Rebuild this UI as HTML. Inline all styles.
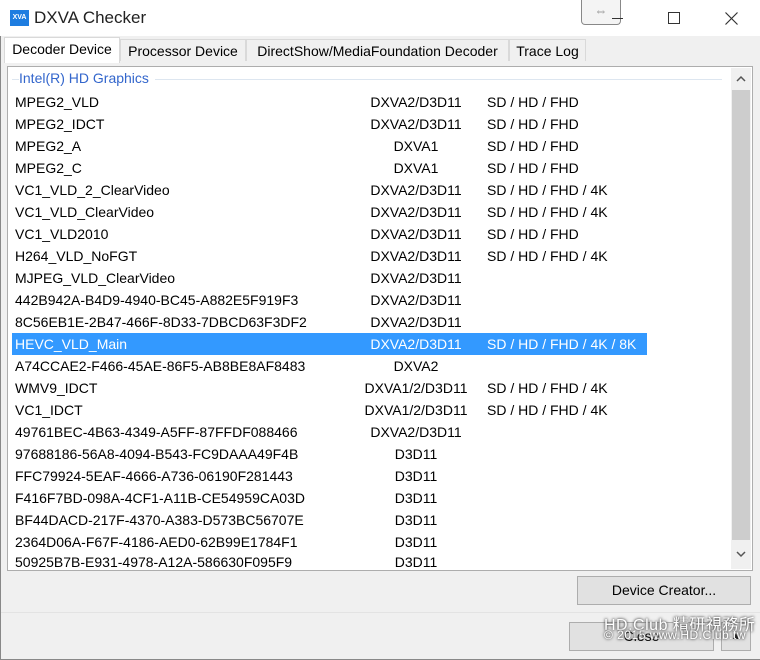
<!DOCTYPE html>
<html><head><meta charset="utf-8"><style>
*{margin:0;padding:0;box-sizing:border-box}
body{width:760px;height:660px;overflow:hidden;background:#f0f0f0;font-family:"Liberation Sans",sans-serif;font-size:14px;color:#000;position:relative}
.win{position:absolute;left:0;top:0;width:760px;height:660px;border-left:1px solid #888;border-bottom:1px solid #888}
.title{position:absolute;left:0;top:0;width:760px;height:36px;background:#fff}
.logo{position:absolute;left:10px;top:10px;width:19px;height:16px;background:#1e7de0;color:#fff;font-size:7px;font-weight:bold;line-height:16px;text-align:center}
.ttext{position:absolute;left:34px;top:8px;font-size:17px;color:#222}
.tab{position:absolute;top:39px;height:22px;border:1px solid #d9d9d9;border-bottom:none;background:#f0f0f0;padding:3px 0 0;font-size:14px;text-align:center}
.panel{position:absolute;left:7px;top:66px;width:746px;height:505px;background:#fff;border:1px solid #adadad}
.grp{position:absolute;left:19px;top:70px;color:#3366cc;font-size:14px;background:#fff;padding-right:6px}
.gline{position:absolute;left:12px;top:79px;width:710px;height:1px;background:#dde6f0}
.row{position:absolute;left:12px;width:635px;height:22px;line-height:22px}
.row span{position:absolute}
.a{left:3px}.b{left:330px;width:148px;text-align:center}.c{left:475px}
.sel{background:#3399ff;color:#fff}
.sb{position:absolute;left:731px;top:68px;width:20px;height:501px;background:#f0f0f0}
.thumb{position:absolute;left:732px;top:90px;width:18px;height:450px;background:#cdcdcd}
.btn{position:absolute;background:#e1e1e1;border:1px solid #adadad;text-align:center}
.wm{position:absolute;color:#fff;text-shadow:0 0 3px #555,0 0 2px #555}
</style></head><body>
<div class="win"></div>
<div class="title"><div class="logo">XVA</div><div class="ttext">DXVA Checker</div>
<div style="position:absolute;left:581px;top:0;width:40px;height:25px;border:1px solid #888;border-top:none;border-radius:0 0 4px 4px;background:#f4f4f4;color:#888;font-size:13px;text-align:center;line-height:22px">⇔</div>
<div style="position:absolute;left:612px;top:18px;width:11px;height:1px;background:#333"></div>
<div style="position:absolute;left:668px;top:12px;width:12px;height:12px;border:1px solid #333"></div>
<svg style="position:absolute;left:725px;top:12px" width="13" height="13"><path d="M0.5 0.5L12.5 12.5M12.5 0.5L0.5 12.5" stroke="#333" stroke-width="1.2"/></svg>
</div>
<div class="tab" style="left:4px;top:37px;width:116px;height:26px;background:#fff;z-index:2">Decoder Device</div>
<div class="tab" style="left:120px;width:126px">Processor Device</div>
<div class="tab" style="left:246px;width:263px">DirectShow/MediaFoundation Decoder</div>
<div class="tab" style="left:509px;width:77px">Trace Log</div>
<div class="panel"></div>
<div class="gline"></div>
<div class="grp">Intel(R) HD Graphics</div>
<div class="sb"></div><div class="thumb"></div>
<svg style="position:absolute;left:736px;top:75px" width="10" height="7"><path d="M1 6L5 2L9 6" stroke="#555" stroke-width="1.5" fill="none"/></svg>
<svg style="position:absolute;left:736px;top:551px" width="10" height="7"><path d="M1 1L5 5L9 1" stroke="#555" stroke-width="1.5" fill="none"/></svg>
<div class="row" style="top:91px"><span class="a">MPEG2_VLD</span><span class="b">DXVA2/D3D11</span><span class="c">SD / HD / FHD</span></div>
<div class="row" style="top:113px"><span class="a">MPEG2_IDCT</span><span class="b">DXVA2/D3D11</span><span class="c">SD / HD / FHD</span></div>
<div class="row" style="top:135px"><span class="a">MPEG2_A</span><span class="b">DXVA1</span><span class="c">SD / HD / FHD</span></div>
<div class="row" style="top:157px"><span class="a">MPEG2_C</span><span class="b">DXVA1</span><span class="c">SD / HD / FHD</span></div>
<div class="row" style="top:179px"><span class="a">VC1_VLD_2_ClearVideo</span><span class="b">DXVA2/D3D11</span><span class="c">SD / HD / FHD / 4K</span></div>
<div class="row" style="top:201px"><span class="a">VC1_VLD_ClearVideo</span><span class="b">DXVA2/D3D11</span><span class="c">SD / HD / FHD / 4K</span></div>
<div class="row" style="top:223px"><span class="a">VC1_VLD2010</span><span class="b">DXVA2/D3D11</span><span class="c">SD / HD / FHD</span></div>
<div class="row" style="top:245px"><span class="a">H264_VLD_NoFGT</span><span class="b">DXVA2/D3D11</span><span class="c">SD / HD / FHD / 4K</span></div>
<div class="row" style="top:267px"><span class="a">MJPEG_VLD_ClearVideo</span><span class="b">DXVA2/D3D11</span></div>
<div class="row" style="top:289px"><span class="a">442B942A-B4D9-4940-BC45-A882E5F919F3</span><span class="b">DXVA2/D3D11</span></div>
<div class="row" style="top:311px"><span class="a">8C56EB1E-2B47-466F-8D33-7DBCD63F3DF2</span><span class="b">DXVA2/D3D11</span></div>
<div class="row sel" style="top:333px"><span class="a">HEVC_VLD_Main</span><span class="b">DXVA2/D3D11</span><span class="c">SD / HD / FHD / 4K / 8K</span></div>
<div class="row" style="top:355px"><span class="a">A74CCAE2-F466-45AE-86F5-AB8BE8AF8483</span><span class="b">DXVA2</span></div>
<div class="row" style="top:377px"><span class="a">WMV9_IDCT</span><span class="b">DXVA1/2/D3D11</span><span class="c">SD / HD / FHD / 4K</span></div>
<div class="row" style="top:399px"><span class="a">VC1_IDCT</span><span class="b">DXVA1/2/D3D11</span><span class="c">SD / HD / FHD / 4K</span></div>
<div class="row" style="top:421px"><span class="a">49761BEC-4B63-4349-A5FF-87FFDF088466</span><span class="b">DXVA2/D3D11</span></div>
<div class="row" style="top:443px"><span class="a">97688186-56A8-4094-B543-FC9DAAA49F4B</span><span class="b">D3D11</span></div>
<div class="row" style="top:465px"><span class="a">FFC79924-5EAF-4666-A736-06190F281443</span><span class="b">D3D11</span></div>
<div class="row" style="top:487px"><span class="a">F416F7BD-098A-4CF1-A11B-CE54959CA03D</span><span class="b">D3D11</span></div>
<div class="row" style="top:509px"><span class="a">BF44DACD-217F-4370-A383-D573BC56707E</span><span class="b">D3D11</span></div>
<div class="row" style="top:531px"><span class="a">2364D06A-F67F-4186-AED0-62B99E1784F1</span><span class="b">D3D11</span></div>
<div class="row" style="top:553px;height:17px;overflow:hidden"><span class="a" style="top:-2px">50925B7B-E931-4978-A12A-586630F095F9</span><span class="b" style="top:-2px">D3D11</span></div>
<div class="btn" style="left:577px;top:576px;width:174px;height:29px;line-height:27px">Device Creator...</div>
<div style="position:absolute;left:1px;top:612px;width:759px;height:47px;background:#f0f0f0;border-top:1px solid #e3e3e3"></div>
<div class="btn" style="left:569px;top:622px;width:145px;height:29px;line-height:27px">Close</div>
<div class="btn" style="left:721px;top:622px;width:30px;height:29px;line-height:27px;font-size:10px">▲</div>
<div class="wm" style="left:604px;top:611px;font-size:16px;letter-spacing:0.5px">HD.Club 精研視務所</div>
<div class="wm" style="left:604px;top:628px;font-size:12px;letter-spacing:0.5px">© 2015 www.HD.Club.tw</div>
</body></html>
